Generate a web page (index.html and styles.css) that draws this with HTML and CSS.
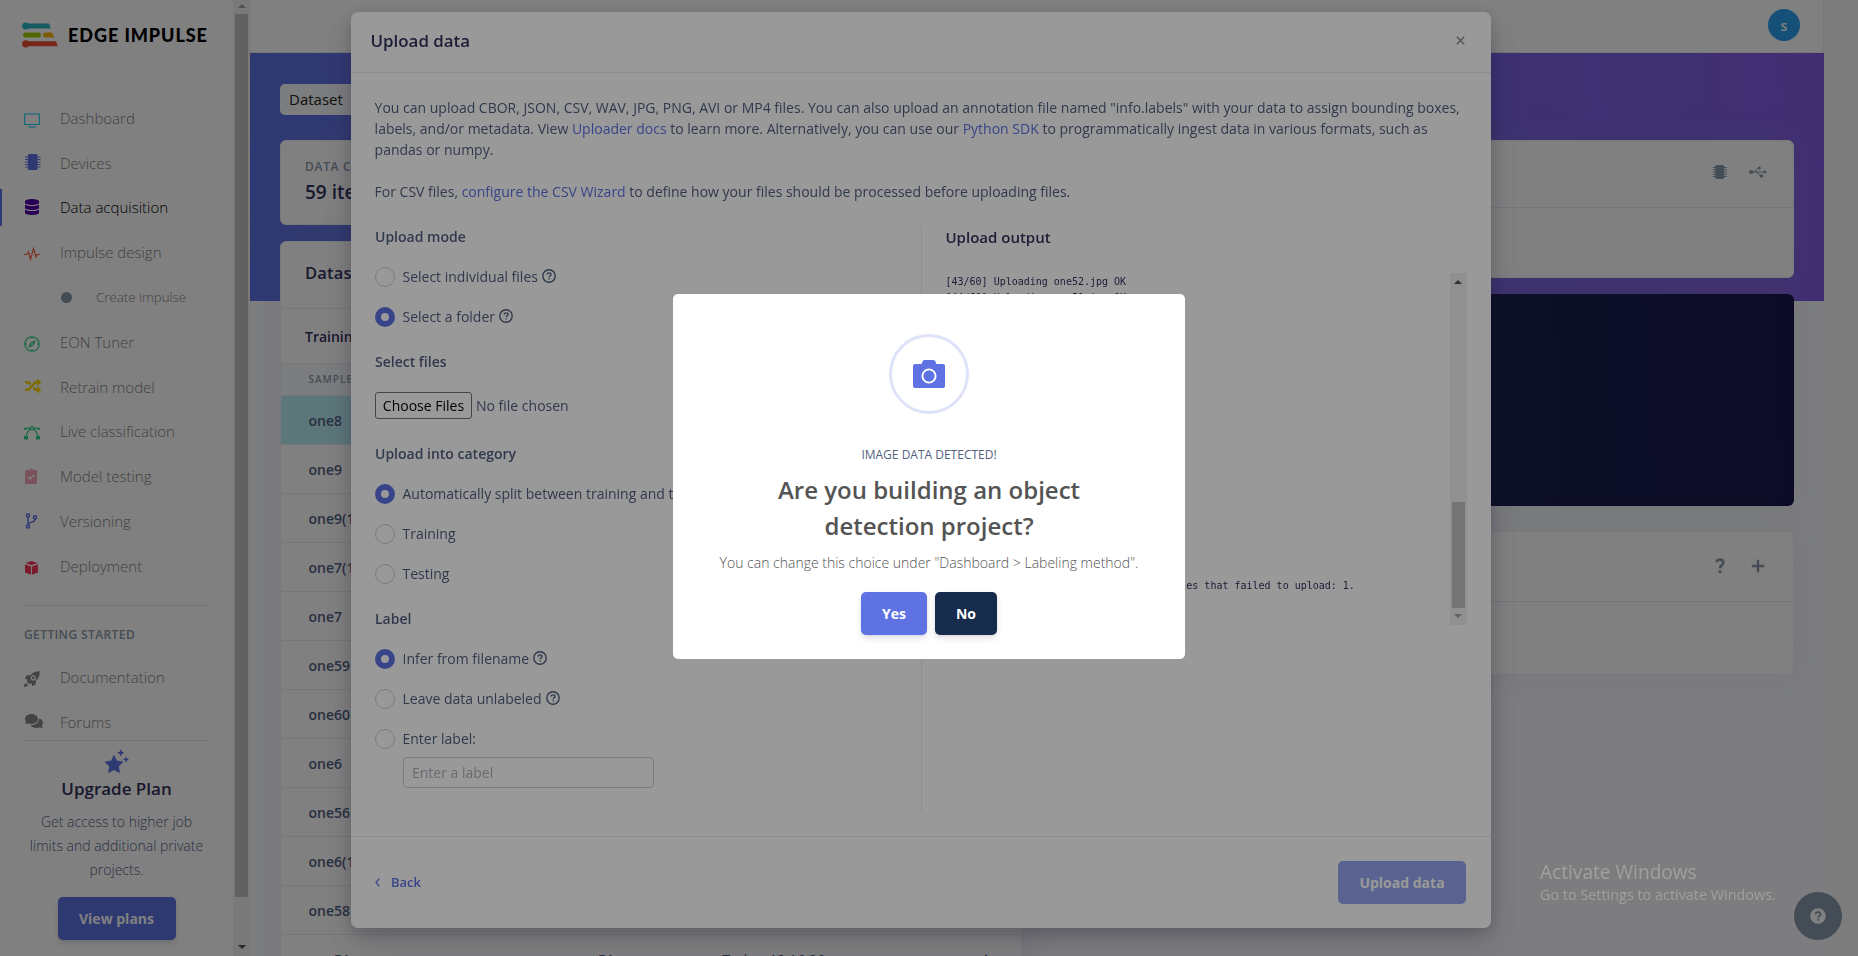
FILE: index.html
```html
<!DOCTYPE html>
<html lang="en">
<head>
<meta charset="utf-8">
<title>Data acquisition - Edge Impulse</title>
<link rel="stylesheet" href="styles.css">
</head>
<body>
<div class="app">
  <aside class="sidebar">
    <div class="sidebar-body">
      <div class="brand">
        <svg class="brand-mark" viewBox="0 0 36 26" width="36" height="26">
          <path d="M3.500 1.500H27l1.800 5H3.500z" fill="#2fb6c3"/><circle cx="3.700" cy="4" r="3.600" fill="#2fb6c3"/>
          <rect x="1" y="10.500" width="18" height="5" rx="2.500" fill="#a3cc00"/>
          <path d="M23.500 10.500H30l2.200 5h-8.700a2.500 2.500 0 0 1 0-5z" fill="#f5b400"/>
          <path d="M3.500 19.300H34l1.900 5H3.500z" fill="#ee4f33"/><circle cx="3.700" cy="21.800" r="3.600" fill="#ee4f33"/>
        </svg>
        <span class="brand-name">EDGE IMPULSE</span>
      </div>
      <nav class="nav">
        <a class="nav-item"><svg class="ico" viewBox="0 0 16 16"><path d="M.7 2h14.600v10.500H.7zM4.500 15h7.500" fill="none" stroke="#11cdef" stroke-width="1.100"/></svg><span>Dashboard</span></a>
        <a class="nav-item"><svg class="ico up" viewBox="0 0 16 16"><rect x="4" y="0" width="9.500" height="16" rx="1.300" fill="#5e72e4"/><path d="M1 3h15.500M1 5.500h15.500M1 8h15.500M1 10.500h15.500M1 13h15.500" stroke="#5e72e4" stroke-width="1"/></svg><span>Devices</span></a>
        <a class="nav-item active"><svg class="ico up" viewBox="-20 0 488 512"><path fill="#5603ad" d="M448 73.143v45.714C448 159.143 347.667 192 224 192S0 159.143 0 118.857V73.143C0 32.857 100.333 0 224 0s224 32.857 224 73.143zM448 176v102.857C448 319.143 347.667 352 224 352S0 319.143 0 278.857V176c48.125 33.143 136.208 48.572 224 48.572S399.874 209.143 448 176zm0 160v102.857C448 479.143 347.667 512 224 512S0 479.143 0 438.857V336c48.125 33.143 136.208 48.572 224 48.572S399.874 369.143 448 336z"/></svg><span>Data acquisition</span></a>
        <a class="nav-item"><svg class="ico" viewBox="0 0 16 16"><path d="M0 8.500h2.800L4.500 6l2 7.500 3-11 2.500 8.500 1.200-2.500H16" fill="none" stroke="#fb6340" stroke-width="1.200"/></svg><span>Impulse design</span></a>
        <a class="nav-item sub"><i class="dot"></i><span>Create impulse</span></a>
        <a class="nav-item"><svg class="ico" viewBox="0 0 16 16"><circle cx="8" cy="8" r="7.200" fill="none" stroke="#2dce89" stroke-width="1.200"/><path d="M8 1v2M8 13v2M1 8h2M13 8h2" stroke="#2dce89"/><path fill="#2dce89" fill-rule="evenodd" d="M12 4l-2.400 5.600L4 12l2.400-5.600zM8 7a1 1 0 1 0 0 2 1 1 0 0 0 0-2z"/></svg><span>EON Tuner</span></a>
        <a class="nav-item"><svg class="ico up shuffle" viewBox="0 0 512 512"><path fill="#ffd600" d="M504.971 359.029c9.373 9.373 9.373 24.569 0 33.941l-80 79.984c-15.010 15.010-40.971 4.490-40.971-16.971V416h-58.785a12.004 12.004 0 0 1-8.773-3.812l-70.556-75.596 53.333-57.143L352 336h32v-39.981c0-21.438 25.943-31.998 40.971-16.971l80 79.981zM12 176h84l52.781 56.551 53.333-57.143-70.556-75.596A11.999 11.999 0 0 0 122.785 96H12c-6.627 0-12 5.373-12 12v56c0 6.627 5.373 12 12 12zm372 0v39.984c0 21.460 25.961 31.980 40.971 16.971l80-79.984c9.373-9.373 9.373-24.569 0-33.941l-80-79.981C409.943 24.021 384 34.582 384 56.019V96h-58.785a12.004 12.004 0 0 0-8.773 3.812L96 336H12c-6.627 0-12 5.373-12 12v56c0 6.627 5.373 12 12 12h110.785c3.326 0 6.503-1.381 8.773-3.812L352 176h32z"/></svg><span>Retrain model</span></a>
        <a class="nav-item"><svg class="ico" viewBox="0 0 16 16"><g fill="none" stroke="#2dce89" stroke-width="1.200"><path d="M2 12.500C2.500 8 4 5.500 6.500 4M14 12.500C13.500 8 12 5.500 9.500 4M1.500 3.500l5-.3M14.500 3.500l-5-.3"/><circle cx="8" cy="3.300" r="1.600"/></g><g fill="#2dce89"><rect x="0" y="11" width="4" height="3.500"/><rect x="12" y="11" width="4" height="3.500"/><circle cx="1.200" cy="3.800" r="1.200"/><circle cx="14.800" cy="3.800" r="1.200"/></g></svg><span>Live classification</span></a>
        <a class="nav-item"><svg class="ico up" viewBox="0 0 16 16"><path fill="#f3a4b5" fill-rule="evenodd" d="M2.300 2H5a2.100 2.100 0 0 1 4 0h2.700A1.300 1.300 0 0 1 13 3.300v11.400a1.300 1.300 0 0 1-1.300 1.300H2.300A1.300 1.300 0 0 1 1 14.700V3.300A1.300 1.300 0 0 1 2.300 2zM7 1.500a.6.600 0 1 0 0 1.200.6.600 0 0 0 0-1.200zM3.600 9.200l2.600 2.800 4.700-4.700-1-1-3.700 3.700-1.600-1.700z"/></svg><span>Model testing</span></a>
        <a class="nav-item"><svg class="ico up" viewBox="0 0 16 16"><g fill="none" stroke="#5e72e4" stroke-width="1.500"><circle cx="4" cy="2.500" r="1.600"/><circle cx="4" cy="13.500" r="1.600"/><circle cx="11" cy="4.300" r="1.600"/><path d="M4 4.200v7.600M11 6c0 3.500-4 2.500-6.700 5"/></g></svg><span>Versioning</span></a>
        <a class="nav-item"><svg class="ico" viewBox="0 0 16 16"><g fill="#f5365c"><path d="M7.500 1L13.500 3 7.500 5.300 1.500 3z"/><path d="M1 4.300l6 2.200V14.800L1 12.500zM14 4.300l-6 2.200V14.800l6-2.300z"/></g></svg><span>Deployment</span></a>
      </nav>
      <hr class="rule">
      <div class="nav-title">GETTING STARTED</div>
      <nav class="nav second">
        <a class="nav-item"><svg class="ico" viewBox="0 0 16 16"><path fill="#888" fill-rule="evenodd" d="M15.800.200C11 .2 8.500 1.500 6.500 4L2.500 4.500.800 8l2.700.2C3 9.500 3 10.500 3.500 12c1.500.8 2.500.8 4.300.5L8 15.200l3.500-1.700.5-4c2.500-2 3.800-4.500 3.800-9.300zM9.300 4.300a2.600 2.600 0 1 1 0 5.200 2.600 2.600 0 0 1 0-5.200z"/><circle cx="9.300" cy="6.900" r="1.400" fill="#888"/><path d="M0 16c0-2 .5-3.500 2.300-3.800L3.800 13.700C3.500 15.500 2 16 0 16z" fill="#888"/></svg><span>Documentation</span></a>
        <a class="nav-item"><svg class="ico chat" viewBox="0 0 576 512"><path fill="#888" d="M416 192c0-88.400-93.100-160-208-160S0 103.600 0 192c0 34.300 14.100 65.900 38 92-13.400 30.200-35.500 54.200-35.800 54.500-2.200 2.300-2.800 5.700-1.500 8.700S4.800 352 8 352c36.600 0 66.900-12.300 88.700-25 32.200 15.700 70.300 25 111.300 25 114.900 0 208-71.600 208-160zm122 220c23.900-26 38-57.700 38-92 0-66.900-53.500-124.200-129.300-148.100.9 6.600 1.300 13.300 1.300 20.100 0 105.900-107.700 192-240 192-10.800 0-21.300-.8-31.700-1.900C207.800 439.600 281.800 480 368 480c41 0 79.100-9.200 111.300-25 21.800 12.700 52.100 25 88.700 25 3.200 0 6.100-1.900 7.300-4.800 1.300-2.900.7-6.300-1.500-8.700-.3-.3-22.400-24.200-35.800-54.500z"/></svg><span>Forums</span></a>
      </nav>
      <div class="upgrade">
        <svg width="24" height="24" viewBox="0 0 24 24" fill="#5e72e4"><path d="M9 6.500l2.700 5.500 6.200.9-4.500 4.400 1.100 6.200L9 20.700l-5.500 2.800 1.100-6.200L.1 12.900l6.200-.9z" stroke="#5e72e4" stroke-linejoin="round" stroke-width=".8"/><path d="M15.700 0l1.100 2.700 2.700 1.100-2.700 1.100-1.100 2.700-1.100-2.700-2.700-1.100 2.700-1.100zM21 7.500l.9 2.100 2.100.9-2.100.9-.9 2.100-.9-2.100-2.100-.9 2.100-.9z"/></svg>
        <div class="upgrade-title">Upgrade Plan</div>
        <p class="upgrade-text">Get access to higher job<br>limits and additional private<br>projects.</p>
        <button class="btn primary plans">View plans</button>
      </div>
    </div>
    <div class="scroll side-scroll"><i class="arrow-up dim"></i><i class="thumb"></i><i class="arrow-down"></i></div>
  </aside>
  <main class="main">
    <header class="topbar"><span class="avatar">s</span></header>
    <div class="hero">
      <div class="tab">Dataset</div>
    </div>
    <div class="columns">
      <div class="col-left">
        <section class="card stat">
          <div class="stat-label">DATA COLLECTED</div>
          <div class="stat-value">59 items</div>
        </section>
        <section class="card dataset">
          <h3 class="card-head">Dataset</h3>
          <div class="tabs">Training</div>
          <div class="tr th"><span>SAMPLE NAME</span></div>
          <div class="tr selected">one8</div>
          <div class="tr">one9</div>
          <div class="tr">one9(1)</div>
          <div class="tr">one7(1)</div>
          <div class="tr">one7</div>
          <div class="tr">one59</div>
          <div class="tr">one60</div>
          <div class="tr">one6</div>
          <div class="tr">one56</div>
          <div class="tr">one6(1)</div>
          <div class="tr">one58</div>
          <div class="tr"><span>one51</span><span>one51</span><span class="thin">Today, 12:16:26</span><span class="kebab">⋮</span></div>
        </section>
      </div>
      <div class="col-right">
        <section class="card collect">
          <div class="card-tools">
            <svg width="16" height="16" viewBox="0 0 16 16" fill="#8898aa"><rect x="3.300" y="1" width="8.700" height="14" rx="1.300"/><path d="M.8 3.500h14M.8 5.700h14M.8 8h14M.8 10.300h14M.8 12.500h14" stroke="#8898aa" stroke-width="1"/></svg>
            <svg width="18" height="12" viewBox="0 0 18 12" fill="#8898aa"><circle cx="2.200" cy="6" r="2.100"/><path d="M15 4l3 2-3 2z"/><circle cx="10.300" cy="2" r="1.500"/><rect x="11" y="8.500" width="3" height="3"/><path d="M2 6h13M4.500 6c2 0 2.500-4 5-4M7 6c2 0 2.500 4 5 4" fill="none" stroke="#8898aa"/></svg>
          </div>
        </section>
        <section class="card raw"></section>
        <section class="card tasks">
          <div class="card-tools">
            <svg width="12" height="16" viewBox="0 0 12 16" fill="none" stroke="#8898aa" stroke-width="2.700"><path d="M2.500 4.200C3 2.300 4.300 1.700 5.900 1.700c1.900 0 3.400 1.100 3.400 2.800 0 2.600-3.200 2.600-3.200 5.800"/><path d="M6 12.300v2.700"/></svg>
            <svg width="14" height="14" viewBox="0 0 14 14"><path d="M7 .8v12.400M.8 7h12.400" stroke="#8898aa" stroke-width="2.400"/></svg>
          </div>
        </section>
      </div>
    </div>
  </main>
  <div class="fab"><svg width="16" height="16" viewBox="0 0 16 16"><circle cx="8" cy="8" r="7.800" fill="#fff"/><path d="M5.500 6.200C5.800 4.800 6.700 4.200 8 4.200c1.400 0 2.500.8 2.500 2 0 1.800-2.300 1.700-2.300 3.500M8.200 10.800v1.800" fill="none" stroke="#8898aa" stroke-width="1.800"/></svg></div>
</div>

<div class="backdrop light"></div>
<div class="modal">
  <div class="modal-head"><h2>Upload data</h2><svg width="9" height="9" viewBox="0 0 9 9"><path d="M.8.8l7.400 7.400M8.200.8L.8 8.200" stroke="#8a8a8a" stroke-width="1.400"/></svg></div>
  <div class="modal-body">
    <p>You can upload CBOR, JSON, CSV, WAV, JPG, PNG, AVI or MP4 files. You can also upload an annotation file named "info.labels" with your data to assign bounding boxes,<br>labels, and/or metadata. View <a>Uploader docs</a> to learn more. Alternatively, you can use our <a>Python SDK</a> to programmatically ingest data in various formats, such as<br>pandas or numpy.</p>
    <p>For CSV files, <a>configure the CSV Wizard</a> to define how your files should be processed before uploading files.</p>
    <div class="split">
      <div class="form">
        <h4>Upload mode</h4>
        <label class="radio"><i></i><span>Select individual files</span><svg class="q" viewBox="0 0 14 14"><circle cx="7" cy="7" r="6.200"/><path d="M5 5.500C5.200 4.400 6 3.900 7 3.900c1.100 0 2 .6 2 1.600C9 6.800 7.200 6.800 7.200 8.200M7.200 9.200v1.400"/></svg></label>
        <label class="radio on"><i></i><span>Select a folder</span><svg class="q" viewBox="0 0 14 14"><circle cx="7" cy="7" r="6.200"/><path d="M5 5.500C5.200 4.400 6 3.900 7 3.900c1.100 0 2 .6 2 1.600C9 6.800 7.200 6.800 7.200 8.200M7.200 9.200v1.400"/></svg></label>
        <h4>Select files</h4>
        <div class="file"><span class="file-btn">Choose Files</span><span>No file chosen</span></div>
        <h4 class="cat">Upload into category</h4>
        <label class="radio on"><i></i><span>Automatically split between training and testing</span></label>
        <label class="radio"><i></i><span>Training</span></label>
        <label class="radio"><i></i><span>Testing</span></label>
        <h4>Label</h4>
        <label class="radio on"><i></i><span>Infer from filename</span><svg class="q" viewBox="0 0 14 14"><circle cx="7" cy="7" r="6.200"/><path d="M5 5.500C5.200 4.400 6 3.900 7 3.900c1.100 0 2 .6 2 1.600C9 6.800 7.200 6.800 7.200 8.200M7.200 9.200v1.400"/></svg></label>
        <label class="radio"><i></i><span>Leave data unlabeled</span><svg class="q" viewBox="0 0 14 14"><circle cx="7" cy="7" r="6.200"/><path d="M5 5.500C5.200 4.400 6 3.900 7 3.900c1.100 0 2 .6 2 1.600C9 6.800 7.200 6.800 7.200 8.200M7.200 9.200v1.400"/></svg></label>
        <label class="radio"><i></i><span>Enter label:</span></label>
        <div class="input">Enter a label</div>
      </div>
      <div class="output">
        <h4>Upload output</h4>
        <div class="log">
<pre>[43/60] Uploading one52.jpg OK
[44/60] Uploading one51.jpg OK














&nbsp;


Done. Files uploaded successful: 59. Files that failed to upload: 1.</pre>
          <div class="scroll"><i class="arrow-up"></i><i class="thumb"></i><i class="arrow-down dim"></i></div>
        </div>
      </div>
    </div>
  </div>
  <div class="modal-foot">
    <a class="back"><svg width="5" height="9" viewBox="0 0 5 9"><path d="M4.300.6L1 4.500l3.300 3.900" fill="none" stroke="#5e72e4" stroke-width="1.300"/></svg>Back</a>
    <button class="btn primary off">Upload data</button>
  </div>
</div>

<div class="backdrop dark"></div>
<div class="alert">
  <div class="alert-icon"><svg width="32" height="28" viewBox="0 0 32 28"><path fill="#5e72e4" d="M2 4h6.500l1.200-2.700A2 2 0 0 1 11.500 0h9a2 2 0 0 1 1.800 1.300L23.500 4H30a2 2 0 0 1 2 2v20a2 2 0 0 1-2 2H2a2 2 0 0 1-2-2V6a2 2 0 0 1 2-2z"/><circle cx="16" cy="16" r="6.600" fill="none" stroke="#fff" stroke-width="1.900"/></svg></div>
  <div class="alert-kicker">IMAGE DATA DETECTED!</div>
  <h2 class="alert-title">Are you building an object<br>detection project?</h2>
  <p class="alert-text">You can change this choice under "Dashboard &gt; Labeling method".</p>
  <div class="alert-actions"><button class="btn primary yes">Yes</button><button class="btn navy no">No</button></div>
</div>
<div class="watermark"><div class="wm-title">Activate Windows</div><div class="wm-text">Go to Settings to activate Windows.</div></div>
</body>
</html>
```

FILE: styles.css
```css
* { box-sizing: border-box; }
body { margin: 0; width: 1858px; height: 956px; overflow: hidden; font-family: "Open Sans", "Noto Sans", sans-serif; font-size: 14px; line-height: 1.5; color: #525f7f; background: #f8fafc; }
h2, h3, h4, p { margin: 0; }
a { color: #5e72e4; }
.app { display: flex; height: 956px; overflow: hidden; }

.sidebar { display: flex; width: 250px; height: 956px; background: #fff; flex: none; }
.sidebar-body { width: 233px; }
.brand { display: flex; align-items: center; gap: 10px; height: 95.7px; padding: 0 0 25px 22px; }
.brand-name { font-family: Lato, sans-serif; font-weight: 900; font-size: 18px; color: #000; letter-spacing: .94px; white-space: nowrap; }
.nav-item { display: flex; align-items: center; height: 44.8px; padding-left: 24px; color: #7f7f7f; font-size: 15px; font-weight: 300; gap: 20px; }
.nav-item span { white-space: nowrap; }
.ico { width: 16px; height: 16px; flex: none; overflow: visible; position: relative; top: 1.500px; }
.ico.up { top: -.5px; }
.ico.shuffle { left: 1px; }
.ico.chat { width: 18px; left: 1px; top: -1px; margin-right: -2px; }
.nav-item.active { color: #000; background: linear-gradient(#5e72e4, #5e72e4) 0 center / 2px 37px no-repeat; }
.nav-item.sub { padding-left: 61px; padding-top: 1px; gap: 24px; font-size: 13.300px; }
.dot { width: 11px; height: 11px; border-radius: 50%; background: #8898aa; flex: none; }
.rule { margin: 16.500px 24px 0; border: 0; border-top: 1px solid #e5e5e5; }
.nav-title { height: 49px; padding: 20px 0 0 24px; font-size: 12px; font-weight: 600; color: #8898aa; letter-spacing: .4px; }
.upgrade { margin: -5px 24px 0; border-top: 1px solid #e5e5e5; padding-top: 8px; display: flex; flex-direction: column; align-items: center; text-align: center; }
.upgrade-title { font-size: 17px; font-weight: 600; color: #32325d; line-height: 26px; margin-top: 3px; }
.upgrade-text { font-weight: 300; line-height: 24px; margin: 8px -10px 15px; white-space: nowrap; }

.btn { height: 43px; border: 0; border-radius: 5px; color: #fff; font: 700 14px "Open Sans", sans-serif; padding: 0; box-shadow: 0 4px 6px rgba(50,50,93,.11), 0 1px 3px rgba(0,0,0,.08); }
.btn.primary { background: #5e72e4; }
.btn.navy { background: #172b4d; }
.btn.off { opacity: .65; box-shadow: none; width: 128px; }
.btn.plans { width: 118px; }
.btn.yes { width: 66px; }
.btn.no { width: 62px; }

.scroll { width: 17px; background: #f1f1f1; display: flex; flex-direction: column; align-items: center; }
.scroll .thumb { width: 13px; background: #c1c1c1; }
.arrow-up, .arrow-down { border: 4px solid transparent; width: 0; height: 0; }
.arrow-up { border-top: 0; border-bottom-color: #505050; }
.arrow-down { border-bottom: 0; border-top-color: #505050; }
.arrow-up.dim { border-bottom-color: #a3a3a3; }
.arrow-down.dim { border-top-color: #a3a3a3; }
.side-scroll { padding-top: 4px; }
.side-scroll .thumb { height: 883px; margin: 6px 0 48px; }

.main { width: 1574px; flex: none; background: #f8f9fe; }
.topbar { height: 53px; background: #fff; border-bottom: 1px solid #e9ecef; border-right: 1px solid #e9ecef; display: flex; justify-content: flex-end; padding: 9px 23px 0 0; }
.avatar { width: 32px; height: 32px; border-radius: 50%; background: #2b9ff0; color: #fff; text-align: center; line-height: 34px; font-size: 14px; font-weight: 600; }
.hero { height: 248px; background: linear-gradient(87deg, #5e72e4, #825ee4); padding: 31px 30px; }
.tab { width: 90px; height: 31px; line-height: 31px; padding-left: 9px; border-radius: 5px; background: #f6f9fc; color: #222; font-size: 15px; font-weight: 500; }
.columns { display: flex; gap: 30px; margin-top: -161px; padding: 0 30px; }
.col-left { width: 742px; flex: none; }
.col-right { flex: 1; }
.card { background: #fff; border: 1px solid #f0f1f4; border-radius: 6px; box-shadow: 0 0 32px rgba(136,152,170,.15); }
.stat { height: 85px; padding: 16px 24px; margin-bottom: 16px; }
.stat-label { font-size: 12px; font-weight: 600; color: #8898aa; letter-spacing: .7px; line-height: 20px; }
.stat-value { font-size: 19px; font-weight: 600; color: #32325d; line-height: 30px; }
.dataset { height: 760px; }
.card-head { height: 67px; line-height: 62px; padding-left: 24px; font-size: 16.500px; font-weight: 600; color: #32325d; letter-spacing: .2px; border-bottom: 1px solid #e9ecef; }
.tabs { height: 55px; line-height: 56px; padding-left: 24px; font-weight: 600; color: #32325d; border-bottom: 1px solid #e9ecef; }
.tr { height: 49px; display: flex; align-items: center; padding-left: 27.500px; font-weight: 600; border-bottom: 1px solid #e9ecef; }
.tr span { width: 264px; }
.tr span + span { width: 150px; }
.tr .thin { font-weight: 400; }
.tr.th { height: 32px; font-size: 10px; letter-spacing: 1px; color: #8898aa; background: #f6f9fc; }
.tr.selected { background: #b8ecf3; }
.tr .kebab { width: 20px; margin-left: 106px; }
.card-tools { display: flex; justify-content: flex-end; align-items: center; gap: 21px; border-bottom: 1px solid #e9ecef; }
.collect { height: 138px; margin-bottom: 16px; }
.collect .card-tools { height: 67px; padding: 0 26px 5px 0; }
.raw { height: 212px; margin-bottom: 25px; border: 0; background: linear-gradient(87deg, #172b4d, #1a174d); }
.tasks { height: 144px; }
.tasks .card-tools { height: 70px; padding: 0 28px 2px 0; gap: 25px; }
.fab { position: fixed; left: 1794px; top: 892px; width: 48px; height: 48px; border-radius: 50%; background: #8898aa; display: flex; align-items: center; justify-content: center; }

.backdrop { position: fixed; inset: 0; background: #000; }
.backdrop.light { opacity: .16; }
.backdrop.dark { opacity: .4; }

.modal { position: fixed; left: 351px; top: 12px; width: 1140px; height: 916px; background: #fff; border-radius: 7px; box-shadow: 0 15px 35px rgba(50,50,93,.2), 0 5px 15px rgba(0,0,0,.17); display: flex; flex-direction: column; }
.modal-head { height: 61px; display: flex; align-items: center; justify-content: space-between; padding: 0 26px 3px 19.500px; border-bottom: 1px solid #e9ecef; }
.modal-head h2 { font-size: 16.900px; font-weight: 600; color: #32325d; }
.modal-body { flex: 1; padding: 24px 24px 0 23.600px; white-space: nowrap; }
.modal-body p { margin-bottom: 21px; }
.split { display: flex; padding-top: 3px; }
.form { width: 547.400px; height: 586px; padding-left: .4px; border-right: 1px solid #e9ecef; }
h4 { font-size: 14px; font-weight: 600; line-height: 21px; }
.form h4 { padding: 0 0 10px; }
.form .radio + h4 { padding-top: 14px; }
.radio { display: flex; height: 40px; align-items: center; }
.radio i { width: 20px; height: 20px; border: 1px solid #cad1d7; border-radius: 50%; margin-right: 7.500px; }
.radio span { position: relative; top: -1px; }
.radio.on i { border: 6px solid #5e72e4; }
.q { width: 14px; height: 14px; margin-left: 4px; fill: none; stroke: #525f7f; stroke-width: 1.4; overflow: visible; position: relative; top: -1px; }
.file { display: flex; align-items: center; gap: 4px; height: 27px; margin-top: 10px; }
.file-btn { width: 97px; height: 27px; line-height: 25px; text-align: center; border: 1px solid #767676; border-radius: 3px; color: #000; }
.form .cat { padding-top: 24px; }
.input { width: 251px; height: 31px; margin: -2px 0 0 28px; border: 1px solid #cad1d7; border-radius: 4px; padding-left: 8px; line-height: 29px; color: #adb5bd; }
.output { flex: 1; padding-left: 23.500px; }
.output h4 { padding-top: 1px; color: #32325d; font-size: 15px; }
.log { margin-top: 25px; width: 521.500px; height: 352px; display: flex; justify-content: space-between; overflow: hidden; }
.log pre { margin: 0; padding-top: 1px; font: 10px/16px "DejaVu Sans Mono", monospace; color: #32325d; }
.log .scroll { height: 352px; padding-top: 7px; }
.log .thumb { height: 106px; margin: 218px 0 6px; }
.modal-foot { height: 92px; border-top: 1px solid #e9ecef; display: flex; align-items: center; justify-content: space-between; padding: 0 25px 0 24px; }
.back { display: flex; align-items: center; gap: 11px; font-size: 13px; font-weight: 600; }

.alert { position: fixed; left: 673px; top: 294px; width: 512px; height: 365px; background: #fff; border-radius: 5px; display: flex; flex-direction: column; align-items: center; text-align: center; padding-top: 40px; }
.alert-icon { width: 80px; height: 80px; border: 3px solid #dfe3fa; border-radius: 50%; display: flex; align-items: center; justify-content: center; flex: none; }
.alert-kicker { margin-top: 32px; font-size: 12px; line-height: 18px; }
.alert-title { margin-top: 8px; font-size: 24px; line-height: 36px; font-weight: 600; color: #545454; }
.alert-text { margin-top: 8px; font-weight: 300; color: #545454; line-height: 21px; }
.alert-actions { display: flex; gap: 8px; margin-top: 19px; }
.watermark { position: fixed; left: 1540px; top: 858px; color: #a0a0a0; white-space: nowrap; }
.wm-title { font-size: 19.100px; line-height: 28px; }
.wm-text { font-size: 14.400px; line-height: 18px; }
```
